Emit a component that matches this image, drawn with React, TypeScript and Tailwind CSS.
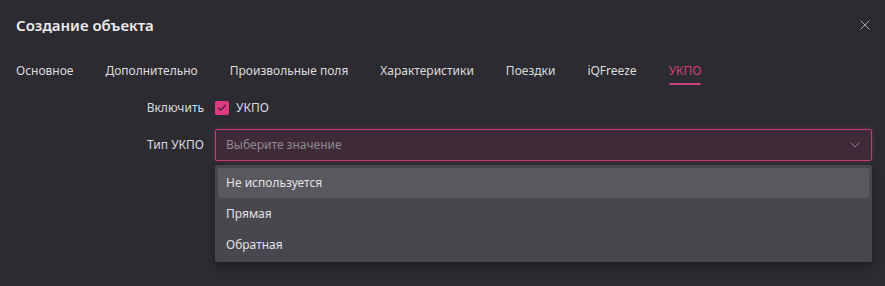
import { X, ChevronDown, Check } from 'lucide-react';

const tabs = ['Основное', 'Дополнительно', 'Произвольные поля', 'Характеристики', 'Поездки', 'iQFreeze', 'УКПО'];
const options = ['Не используется', 'Прямая', 'Обратная'];

const App = () => {
    const active = 'УКПО';

    return (
        <div
            className="h-[286px] w-[885px] overflow-hidden bg-[#2c2b31] text-[12px] text-[#dcdcdf]"
            style={{ fontFamily: '"Noto Sans", "Open Sans", sans-serif' }}
        >
            {/* header */}
            <div className="flex h-[50px] items-center justify-between pl-4 pr-[10px]">
                <h1 className="text-[15px] font-semibold text-[#ececef]">Создание объекта</h1>
                <button type="button" className="flex h-5 w-5 items-center justify-center text-[#a9a8ae]">
                    <X className="h-4 w-4" strokeWidth={1.5} />
                </button>
            </div>

            {/* tabs */}
            <div className="flex gap-8 px-4 pt-[11px]">
                {tabs.map((tab) => (
                    <div key={tab} className="flex flex-col items-stretch">
                        <span className={tab === active ? 'leading-[20px] text-[#d2417f]' : 'leading-[20px] text-[#dcdcdf]'}>
                            {tab}
                        </span>
                        <span className={tab === active ? 'mt-[2px] h-[2px] rounded-full bg-[#c9417c]' : 'mt-[2px] h-[2px]'} />
                    </div>
                ))}
            </div>

            {/* form */}
            <div className="mt-[14px] grid grid-cols-[188px_1fr] items-center gap-x-[11px] gap-y-[12px] pl-4 pr-[13px]">
                <span className="text-right leading-[16px]">Включить</span>
                <label className="flex items-center gap-[7px]">
                    <span className="flex h-[14px] w-[14px] items-center justify-center rounded-[2px] bg-[#df3a84]">
                        <Check className="h-[10px] w-[10px] text-[#3a1f2c]" strokeWidth={3} />
                    </span>
                    <span>УКПО</span>
                </label>

                <span className="text-right">Тип УКПО</span>
                <div className="relative">
                    <div className="flex h-[32px] items-center justify-between rounded-[2px] border border-[#c23c75] bg-[#3e2b37] pl-[10px] pr-[8px] shadow-[0_0_4px_rgba(194,60,117,0.35)]">
                        <span className="text-[#8f8a93]">Выберите значение</span>
                        <ChevronDown className="h-4 w-4 text-[#8e8290]" strokeWidth={1.5} />
                    </div>
                    <ul className="absolute left-0 right-0 top-[36px] rounded-[2px] bg-[#48474d] px-[3px] pb-[2px] pt-[3px] shadow-[0_4px_10px_rgba(0,0,0,0.35)]">
                        {options.map((opt, i) => (
                            <li
                                key={opt}
                                className={
                                    i === 0
                                        ? 'flex h-[30px] items-center rounded-[2px] bg-[#59585e] px-[8px] text-[#e2e2e4]'
                                        : 'flex h-[31px] items-center px-[8px] text-[#e2e2e4]'
                                }
                            >
                                {opt}
                            </li>
                        ))}
                    </ul>
                </div>
            </div>
        </div>
    );
};

export default App;
